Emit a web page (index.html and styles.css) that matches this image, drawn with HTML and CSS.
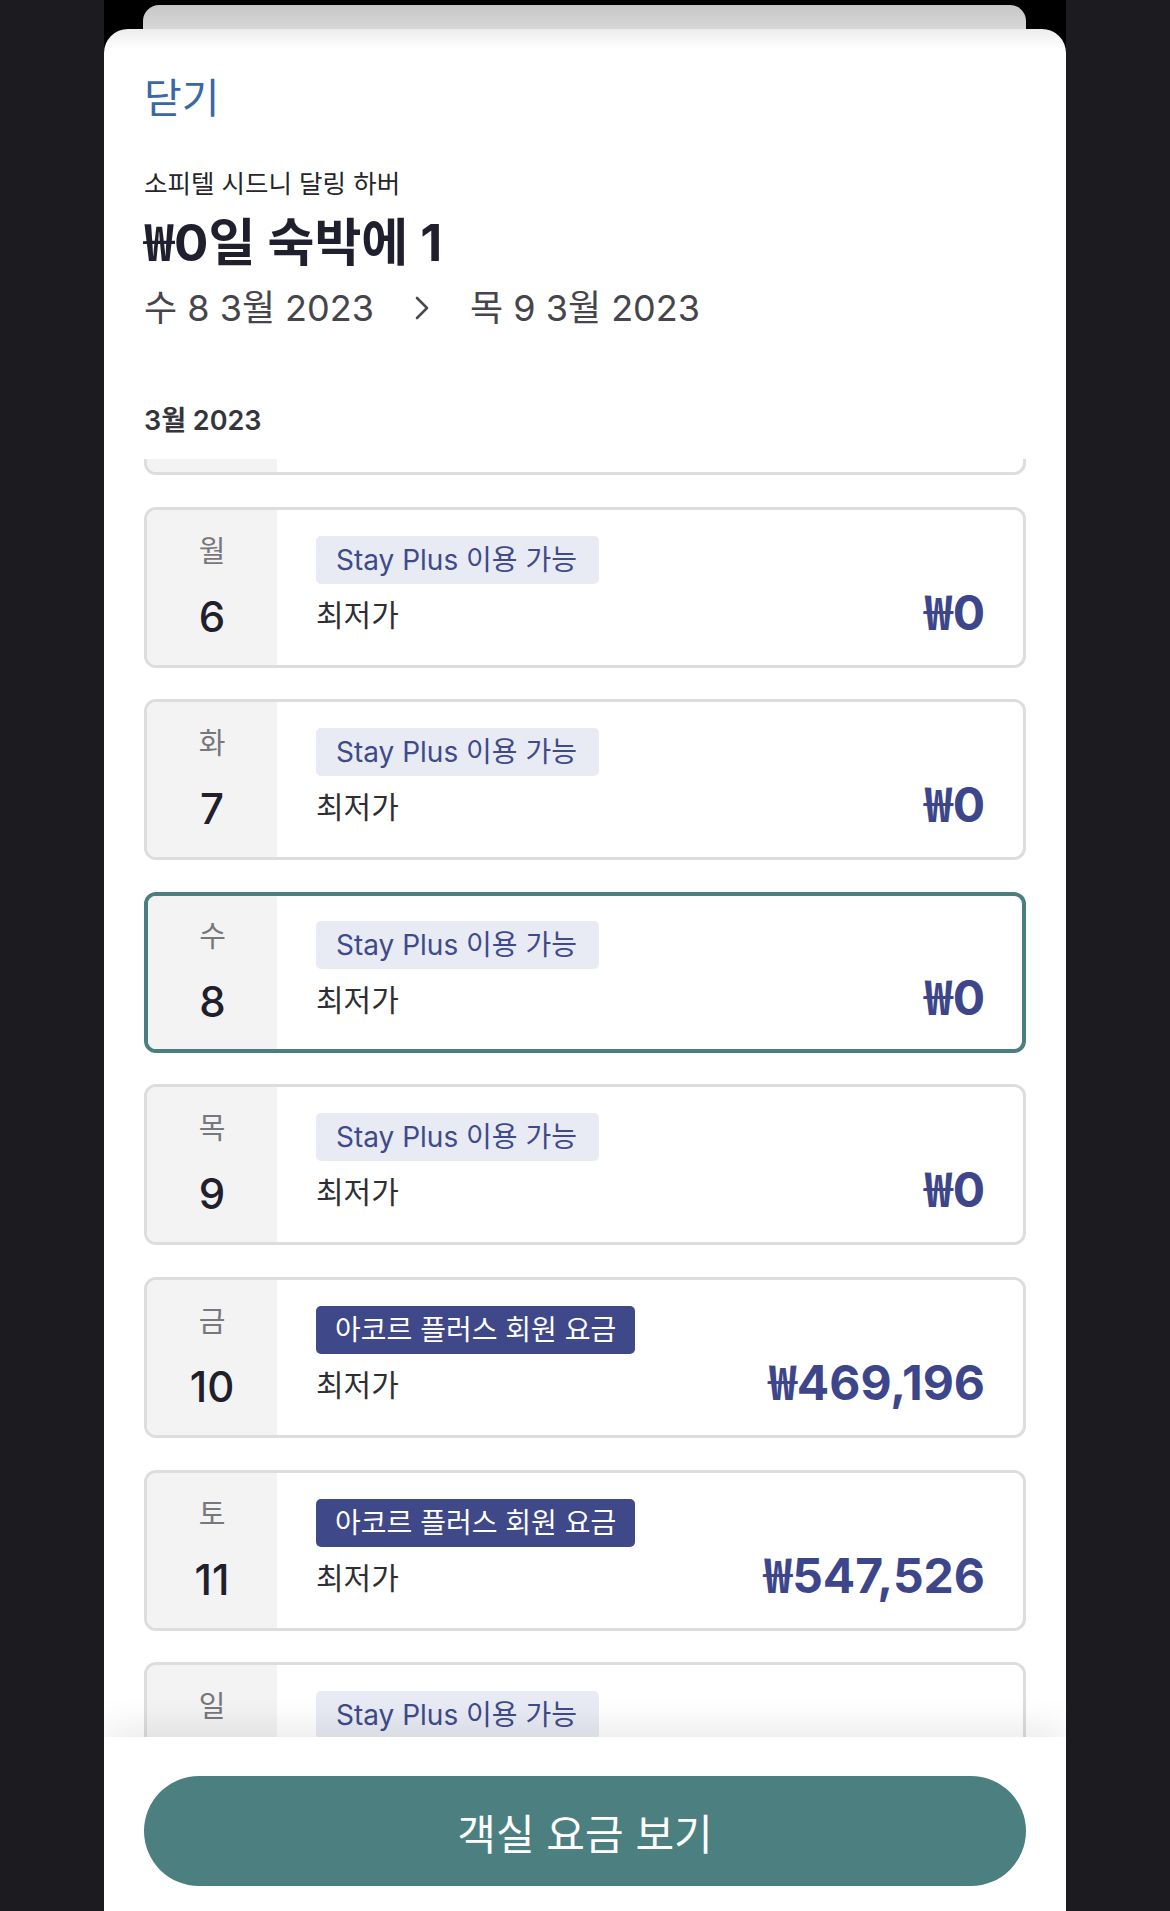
FILE: index.html
```html
<!DOCTYPE html>
<html lang="ko">
<head>
<meta charset="utf-8">
<title>객실 요금</title>
<link rel="stylesheet" href="styles.css">
</head>
<body>
<div class="stage">
  <div class="backcard"></div>
  <div class="sheet">
    <header class="head">
      <div class="close">닫기</div>
      <div class="hotel">소피텔 시드니 달링 하버</div>
      <h1 class="title"><span class="won">₩</span>0일 숙박에 1</h1>
      <div class="dates">
        <span>수 8 3월 2023</span>
        <svg class="chev" width="16" height="24" viewBox="0 0 16 24"><path d="M3 2 L13 12 L3 22" fill="none" stroke="#4a4a4f" stroke-width="2.6" stroke-linecap="round" stroke-linejoin="round"/></svg>
        <span>목 9 3월 2023</span>
      </div>
      <div class="month">3월 2023</div>
    </header>

    <div class="list">
      <div class="list-inner">
        <div class="card">
          <div class="day"><span class="dow">일</span><span class="num">5</span></div>
          <div class="info"><span class="badge">Stay Plus 이용 가능</span><div class="row"><span class="label">최저가</span><span class="price"><span class="won">₩</span>0</span></div></div>
        </div>
        <div class="card">
          <div class="day"><span class="dow">월</span><span class="num">6</span></div>
          <div class="info"><span class="badge">Stay Plus 이용 가능</span><div class="row"><span class="label">최저가</span><span class="price"><span class="won">₩</span>0</span></div></div>
        </div>
        <div class="card">
          <div class="day"><span class="dow">화</span><span class="num">7</span></div>
          <div class="info"><span class="badge">Stay Plus 이용 가능</span><div class="row"><span class="label">최저가</span><span class="price"><span class="won">₩</span>0</span></div></div>
        </div>
        <div class="card selected">
          <div class="day"><span class="dow">수</span><span class="num">8</span></div>
          <div class="info"><span class="badge">Stay Plus 이용 가능</span><div class="row"><span class="label">최저가</span><span class="price"><span class="won">₩</span>0</span></div></div>
        </div>
        <div class="card">
          <div class="day"><span class="dow">목</span><span class="num">9</span></div>
          <div class="info"><span class="badge">Stay Plus 이용 가능</span><div class="row"><span class="label">최저가</span><span class="price"><span class="won">₩</span>0</span></div></div>
        </div>
        <div class="card">
          <div class="day"><span class="dow">금</span><span class="num">10</span></div>
          <div class="info"><span class="badge member">아코르 플러스 회원 요금</span><div class="row"><span class="label">최저가</span><span class="price"><span class="won">₩</span>469,196</span></div></div>
        </div>
        <div class="card">
          <div class="day"><span class="dow">토</span><span class="num">11</span></div>
          <div class="info"><span class="badge member">아코르 플러스 회원 요금</span><div class="row"><span class="label">최저가</span><span class="price"><span class="won">₩</span>547,526</span></div></div>
        </div>
        <div class="card">
          <div class="day"><span class="dow">일</span><span class="num">12</span></div>
          <div class="info"><span class="badge">Stay Plus 이용 가능</span><div class="row"><span class="label">최저가</span><span class="price"><span class="won">₩</span>0</span></div></div>
        </div>
      </div>
    </div>

    <footer class="foot">
      <button class="cta">객실 요금 보기</button>
    </footer>
  </div>
</div>
</body>
</html>
```

FILE: styles.css
```css
* { box-sizing: border-box; }

html, body {
  margin: 0;
  padding: 0;
}

body {
  width: 1170px;
  height: 1911px;
  overflow: hidden;
  background: #1c1c20;
  font-family: "Inter", "Noto Sans CJK KR", sans-serif;
  color: #222;
}

.won {
  font-family: "Noto Sans CJK KR", sans-serif;
  line-height: 0;
}

.stage {
  margin: 0 104px;
  height: 1911px;
  background: #000;
  padding-top: 5px;
}

.backcard {
  margin: 0 40px 0 39px;
  height: 24px;
  border-radius: 16px 16px 0 0;
  background: linear-gradient(#c7c7c7, #d7d7d7);
}

.sheet {
  height: 1882px;
  border-radius: 24px 24px 0 0;
  background: linear-gradient(#ececec, #ffffff 20px);
  overflow: hidden;
}

.head {
  height: 430px;
  padding: 39px 40px 0;
}

.close {
  font-size: 41px;
  line-height: 60px;
  color: #3a68a4;
}

.hotel {
  margin-top: 38px;
  font-size: 25.5px;
  line-height: 36px;
  color: #25252b;
}

.title {
  height: 60px;
  margin: 11px 0 0;
  font-size: 51px;
  line-height: 60px;
  font-weight: 700;
  color: #1f1f2d;
  letter-spacing: 0;
}

.dates {
  margin-top: 10px;
  display: flex;
  align-items: center;
  gap: 40px;
  font-size: 36px;
  line-height: 50px;
  color: #45454b;
}

.chev { display: block; }

.month {
  margin-top: 70px;
  font-size: 27px;
  line-height: 36px;
  font-weight: 600;
  color: #35353c;
}

.list {
  height: 1278px;
  overflow: hidden;
  padding: 0 40px;
}

.list-inner {
  display: flex;
  flex-direction: column;
  gap: 31.6px;
  margin-top: -145px;
}

.card {
  display: flex;
  height: 161px;
  flex-shrink: 0;
  border: 3px solid #dddddf;
  border-radius: 12px;
  overflow: hidden;
  background: #fff;
}

.card.selected {
  border: 4px solid #4b7f7f;
}

.day {
  width: 130px;
  flex-shrink: 0;
  background: #f3f3f4;
  display: flex;
  flex-direction: column;
  align-items: center;
  padding-top: 24px;
}

.selected .day { width: 129px; padding-top: 23px; }

.dow {
  font-size: 29px;
  line-height: 36px;
  color: #77777c;
}

.num {
  margin-top: 22px;
  font-size: 42px;
  line-height: 50px;
  font-weight: 500;
  color: #20202c;
}

.info {
  flex: 1;
  padding: 26px 38px 0 39px;
  display: flex;
  flex-direction: column;
  align-items: flex-start;
}

.selected .info { padding-top: 25px; padding-right: 37px; }

.badge {
  display: inline-block;
  height: 48px;
  padding: 0 22px 0 20px;
  border-radius: 5px;
  font-size: 28px;
  line-height: 48px;
  background: #e8ebf3;
  color: #3f4a8b;
}

.badge.member {
  padding: 0 19px;
  background: #3f4888;
  color: #ffffff;
}

.row {
  align-self: stretch;
  height: 56px;
  display: flex;
  justify-content: space-between;
  align-items: flex-start;
}

.label {
  margin-top: 9px;
  font-size: 30px;
  line-height: 44px;
  color: #2e2e34;
}

.price {
  margin-top: 4px;
  font-size: 48px;
  line-height: 50px;
  font-weight: 700;
  color: #3d468a;
  letter-spacing: 0;
}

.foot {
  position: relative;
  z-index: 1;
  height: 174px;
  padding: 39px 40px 0;
  background: #fff;
  box-shadow: 0 -14px 30px rgba(0, 0, 0, 0.07);
}

.cta {
  display: flex;
  align-items: center;
  justify-content: center;
  width: 100%;
  height: 110px;
  border: 0;
  border-radius: 55px;
  background: #4c8080;
  color: #fff;
  font-family: "Inter", "Noto Sans CJK KR", sans-serif;
  font-size: 42px;
  padding: 0;
}
```
